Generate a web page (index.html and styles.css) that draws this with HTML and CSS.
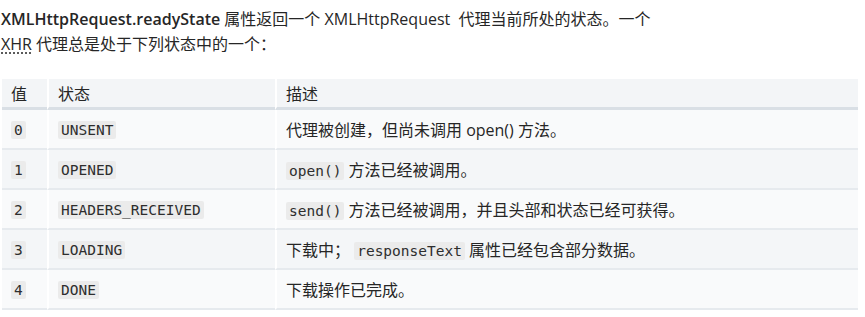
FILE: index.html
```html
<!DOCTYPE html>
<html lang="zh-CN">
<head>
<meta charset="utf-8">
<link rel="stylesheet" href="styles.css">
</head>
<body>
<div class="page">
  <p class="intro"><strong>XMLHttpRequest.readyState</strong> 属性返回一个 XMLHttpRequest&nbsp; 代理当前所处的状态。一个<br><abbr title="XMLHttpRequest">XHR</abbr> 代理总是处于下列状态中的一个：</p>
  <table class="states">
    <thead>
      <tr><th class="c-val">值</th><th class="c-state">状态</th><th>描述</th></tr>
    </thead>
    <tbody>
      <tr><td><code>0</code></td><td><code>UNSENT</code></td><td>代理被创建，但尚未调用 open() 方法。</td></tr>
      <tr><td><code>1</code></td><td><code>OPENED</code></td><td><code>open()</code> 方法已经被调用。</td></tr>
      <tr><td><code>2</code></td><td><code>HEADERS_RECEIVED</code></td><td><code>send()</code> 方法已经被调用，并且头部和状态已经可获得。</td></tr>
      <tr><td><code>3</code></td><td><code>LOADING</code></td><td>下载中； <code>responseText</code> 属性已经包含部分数据。</td></tr>
      <tr><td><code>4</code></td><td><code>DONE</code></td><td>下载操作已完成。</td></tr>
    </tbody>
  </table>
</div>
</body>
</html>
```

FILE: styles.css
```css
html, body {
  margin: 0;
  padding: 0;
  background: #ffffff;
}
body {
  font-family: "Open Sans", "Noto Sans CJK SC", sans-serif;
  color: #262626;
}
.page {
  padding: 0 7px 0 0;
}
.intro {
  margin: 0 0 0 1px;
  padding-top: 7px;
  font-size: 16px;
  line-height: 25px;
}
.intro strong {
  font-weight: 600;
}
.intro abbr {
  text-decoration: underline dotted;
  text-underline-offset: 3px;
}
.states {
  margin: 22px 0 0 2px;
  width: 856px;
  border-collapse: separate;
  border-spacing: 0;
  font-size: 16px;
}
.states th, .states td {
  text-align: left;
  padding: 0 9px;
  height: 38px;
  border-left: 2px solid #ffffff;
  border-bottom: 2px solid #e6eaee;
  vertical-align: middle;
  font-weight: 400;
  white-space: nowrap;
}
.states tr > :first-child {
  border-left: none;
}
.states th {
  height: 28px;
  background: #f3f5f7;
  border-bottom: 3px solid #d9dfe5;
}
.states .c-val { width: 27px; }
.states .c-state { width: 208px; }
.states tbody tr:nth-child(odd) td { background: #f9fafb; }
.states tbody tr:nth-child(even) td { background: #f4f6f8; }
code {
  font-family: "DejaVu Sans Mono", monospace;
  font-size: 14.5px;
  background: #ebebeb;
  border-radius: 2px;
  padding: 1px 3px;
  color: #2e2e2e;
}
```
